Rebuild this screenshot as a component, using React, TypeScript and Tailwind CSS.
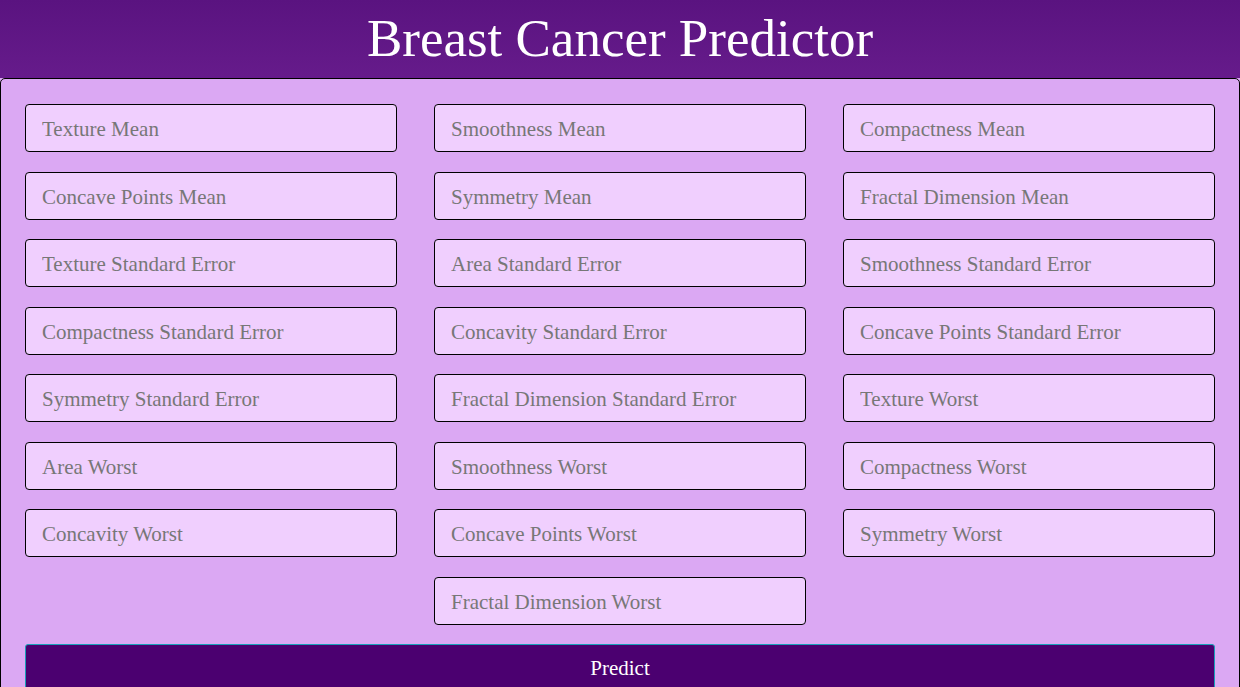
const fields = [
  "Texture Mean",
  "Smoothness Mean",
  "Compactness Mean",
  "Concave Points Mean",
  "Symmetry Mean",
  "Fractal Dimension Mean",
  "Texture Standard Error",
  "Area Standard Error",
  "Smoothness Standard Error",
  "Compactness Standard Error",
  "Concavity Standard Error",
  "Concave Points Standard Error",
  "Symmetry Standard Error",
  "Fractal Dimension Standard Error",
  "Texture Worst",
  "Area Worst",
  "Smoothness Worst",
  "Compactness Worst",
  "Concavity Worst",
  "Concave Points Worst",
  "Symmetry Worst",
];

const inputCls =
  "h-[48px] bg-[#f0cffe] border border-black rounded-[4px] px-[16px] pt-[3px] text-[21px] text-[#333] placeholder:text-[#777777] outline-none";

export default function App() {
  return (
    <div className="min-h-[687px] bg-[#dba8f3] font-['Liberation_Serif',serif]">
      <header className="h-[78px] bg-gradient-to-b from-[#5a1380] to-[#661b8b] flex items-center justify-center">
        <h1 className="text-white text-[53px] leading-none pb-[2px]">Breast Cancer Predictor</h1>
      </header>
      <form
        className="border border-black rounded-[5px] bg-[#dba8f3] px-[24px] pt-[25px] pb-[24px]"
        onSubmit={(e) => e.preventDefault()}
      >
        <div className="grid grid-cols-3 gap-x-[37px] gap-y-[19.5px]">
          {fields.map((f) => (
            <input key={f} type="text" placeholder={f} className={inputCls} />
          ))}
          <input type="text" placeholder="Fractal Dimension Worst" className={`col-start-2 ${inputCls}`} />
        </div>
        <button
          type="submit"
          className="mt-[19px] w-full h-[48px] pt-[2px] bg-[#4b0070] border border-[#17a2b8] rounded-[3px] text-white text-[21px]"
        >
          Predict
        </button>
      </form>
    </div>
  );
}
